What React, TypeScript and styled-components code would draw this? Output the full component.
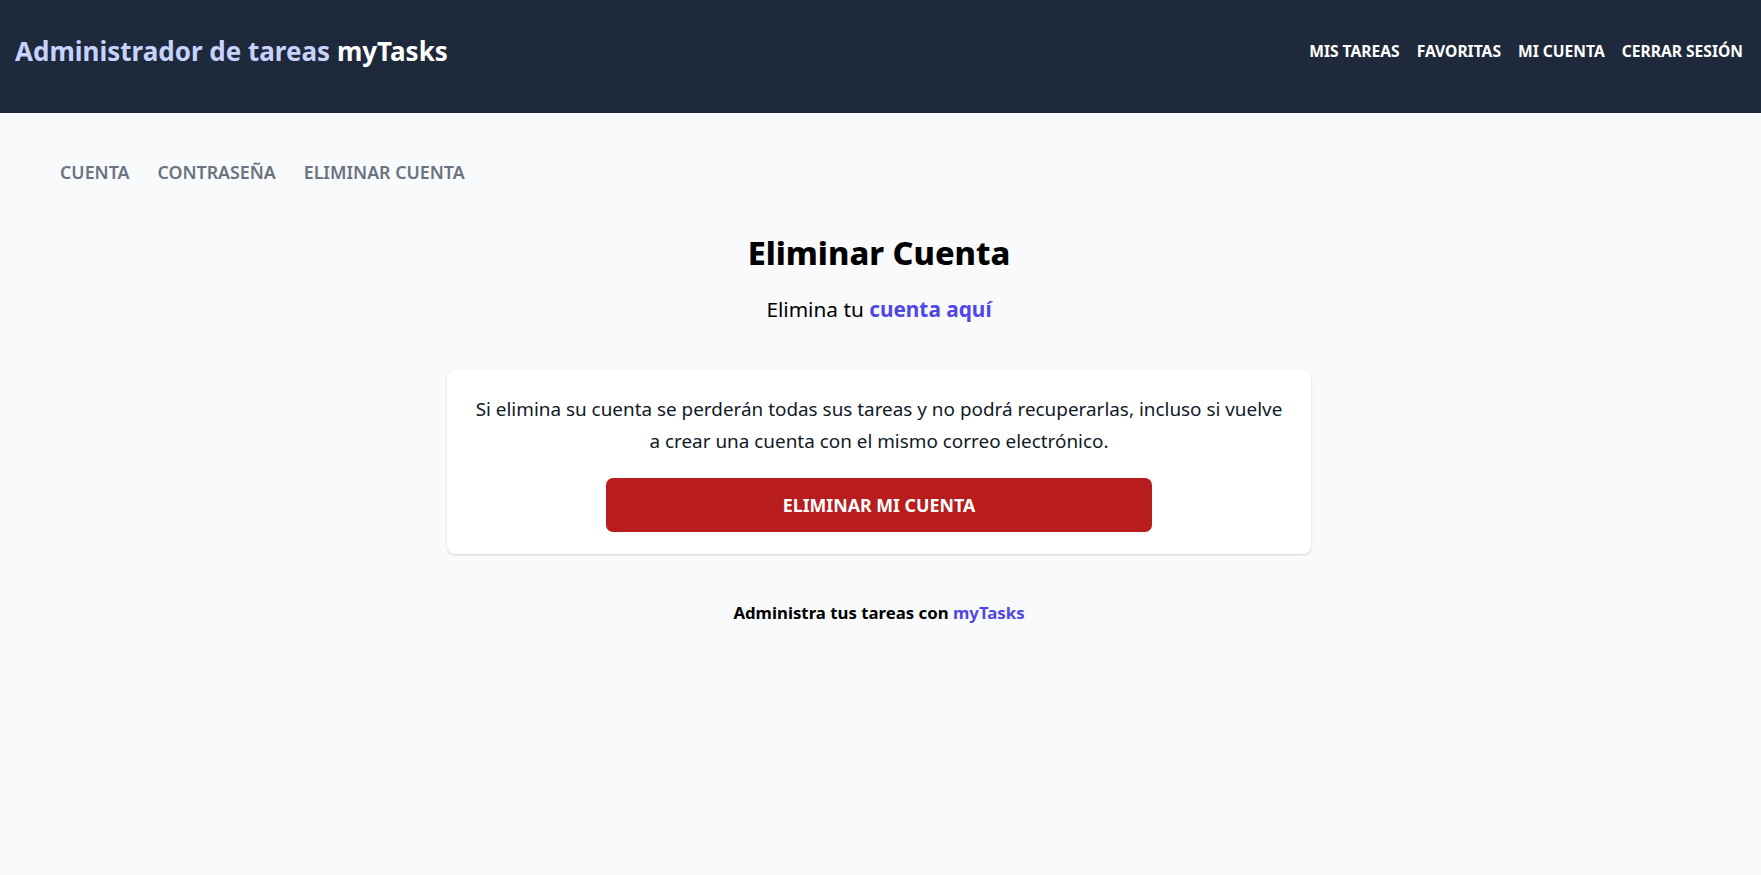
import React from "react";
import styled, { createGlobalStyle } from "styled-components";

const GlobalStyle = createGlobalStyle`
  * { box-sizing: border-box; }
  html, body { margin: 0; padding: 0; }
  body {
    background: #f8fafc;
    font-family: "Noto Sans", "Open Sans", sans-serif;
    color: #000;
  }
`;

const Page = styled.div`
  min-height: 875px;
  background: #f8fafc;
`;

const Header = styled.header`
  height: 113px;
  background: #1e293b;
  display: flex;
  align-items: center;
  justify-content: space-between;
  padding: 0 18px 12px 15px;
`;

const Brand = styled.h1`
  margin: 0;
  font-size: 26px;
  font-weight: 700;
  color: #c7d2fe;
`;

const BrandStrong = styled.span`
  color: #ffffff;
`;

const TopNav = styled.nav`
  display: flex;
  gap: 17px;
`;

const TopLink = styled.a`
  color: #ffffff;
  font-size: 15.6px;
  font-weight: 700;
  text-transform: uppercase;
  text-decoration: none;
`;

const SubNav = styled.nav`
  display: flex;
  gap: 28px;
  padding-left: 60px;
  margin-top: 45px;
`;

const SubLink = styled.a`
  color: #6b7280;
  font-size: 17.8px;
  line-height: 28px;
  font-weight: 600;
  text-transform: uppercase;
  text-decoration: none;
`;

const Main = styled.main`
  display: flex;
  flex-direction: column;
  align-items: center;
  padding-right: 3px;
`;

const Title = styled.h2`
  margin: 47px 0 0;
  font-size: 32.5px;
  line-height: 40px;
  font-weight: 800;
  color: #000;
`;

const Subtitle = styled.p`
  margin: 22px 0 0;
  font-size: 20.8px;
  line-height: 28px;
  color: #000;
`;

const Highlight = styled.span`
  color: #4f46e5;
  font-weight: 700;
`;

const Card = styled.section`
  margin-top: 47px;
  width: 864px;
  background: #ffffff;
  border-radius: 8px;
  box-shadow: 0 1px 3px rgba(0, 0, 0, 0.1), 0 1px 2px rgba(0, 0, 0, 0.06);
  padding: 23px 20px 22px;
  display: flex;
  flex-direction: column;
  align-items: center;
  gap: 21px;
`;

const CardText = styled.p`
  margin: 0;
  font-size: 18.9px;
  line-height: 32px;
  text-align: center;
  color: #111827;
  white-space: nowrap;
`;

const DangerButton = styled.button`
  width: 546px;
  height: 54px;
  border: none;
  border-radius: 7px;
  background: #b91c1c;
  color: #ffffff;
  font-family: inherit;
  font-size: 17.8px;
  font-weight: 700;
  text-transform: uppercase;
  cursor: pointer;
`;

const Footer = styled.p`
  margin: 47px 0 0;
  font-size: 16.8px;
  line-height: 24px;
  font-weight: 700;
  color: #000;
`;

export default function App() {
  return (
    <Page>
      <GlobalStyle />
      <Header>
        <Brand>
          Administrador de tareas <BrandStrong>myTasks</BrandStrong>
        </Brand>
        <TopNav>
          <TopLink href="#">Mis tareas</TopLink>
          <TopLink href="#">Favoritas</TopLink>
          <TopLink href="#">Mi cuenta</TopLink>
          <TopLink href="#">Cerrar sesión</TopLink>
        </TopNav>
      </Header>
      <SubNav>
        <SubLink href="#">Cuenta</SubLink>
        <SubLink href="#">Contraseña</SubLink>
        <SubLink href="#">Eliminar cuenta</SubLink>
      </SubNav>
      <Main>
        <Title>Eliminar Cuenta</Title>
        <Subtitle>
          Elimina tu <Highlight>cuenta aquí</Highlight>
        </Subtitle>
        <Card>
          <CardText>
            Si elimina su cuenta se perderán todas sus tareas y no podrá recuperarlas, incluso si vuelve
            <br />a crear una cuenta con el mismo correo electrónico.
          </CardText>
          <DangerButton>Eliminar mi cuenta</DangerButton>
        </Card>
        <Footer>
          Administra tus tareas con <Highlight>myTasks</Highlight>
        </Footer>
      </Main>
    </Page>
  );
}
